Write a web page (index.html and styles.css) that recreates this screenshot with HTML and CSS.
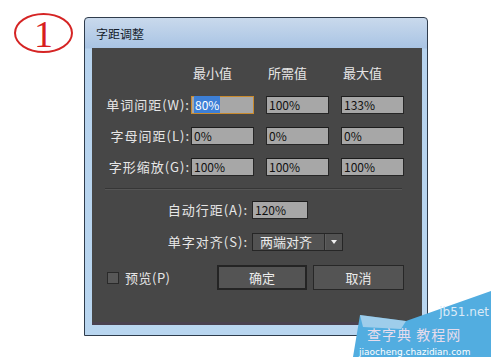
FILE: index.html
```html
<!DOCTYPE html>
<html lang="zh-CN">
<head>
  <meta charset="UTF-8">
  <meta name="viewport" content="width=device-width, initial-scale=1">
  <title>字距调整</title>
  <link rel="stylesheet" href="styles.css">
</head>
<body>
  <div class="page">
    <div class="marker"><span>1</span></div>

    <div class="dialog">
      <div class="titlebar">字距调整</div>
      <div class="panel">
        <div class="grid">
          <div></div>
          <div class="colhead">最小值</div>
          <div class="colhead">所需值</div>
          <div class="colhead">最大值</div>

          <label class="lbl">单词间距(W):</label>
          <div class="field focus"><span class="sel">80%</span></div>
          <div class="field">100%</div>
          <div class="field">133%</div>

          <label class="lbl">字母间距(L):</label>
          <div class="field">0%</div>
          <div class="field">0%</div>
          <div class="field">0%</div>

          <label class="lbl">字形缩放(G):</label>
          <div class="field">100%</div>
          <div class="field">100%</div>
          <div class="field">100%</div>
        </div>

        <div class="sep"></div>

        <div class="row">
          <label class="lbl">自动行距(A):</label>
          <div class="field small">120%</div>
        </div>
        <div class="row">
          <label class="lbl">单字对齐(S):</label>
          <div class="select">
            <span class="select-text">两端对齐</span>
            <span class="select-arrow"></span>
          </div>
        </div>

        <div class="actions">
          <label class="check"><span class="box"></span>预览(P)</label>
          <div class="buttons">
            <button class="btn default">确定</button>
            <button class="btn">取消</button>
          </div>
        </div>
      </div>
    </div>
  </div>

  <div class="watermark">
    <svg width="140" height="70" viewBox="0 0 140 70">
      <polygon points="2,70 9,28 55,34 140,4 140,70" fill="#52ade0"/>
      <polygon points="9,28 55,34 50,42 12,40" fill="#e9eef5" opacity="0.5"/>
    </svg>
    <span class="wm-site">jb51.net</span>
    <span class="wm-name">查字典 教程网</span>
    <span class="wm-url">jiaocheng.chazidian.com</span>
  </div>
</body>
</html>
```

FILE: styles.css
```css
* {
  box-sizing: border-box;
}

body {
  margin: 0;
  background: #ffffff;
  font-family: "Noto Sans CJK SC", "DejaVu Sans", sans-serif;
  font-size: 12px;
  overflow: hidden;
}

.page {
  display: flex;
  align-items: flex-start;
  padding: 13px 0 0 14px;
}

.marker {
  width: 59px;
  height: 40px;
  border: 2px solid #d52424;
  border-radius: 50%;
  display: flex;
  justify-content: center;
  align-items: center;
}

.marker span {
  font-family: "Liberation Serif", serif;
  font-size: 38px;
  line-height: 1;
  color: #d81e1e;
  margin-top: 2px;
}

.dialog {
  margin: 4px 0 0 11px;
  width: 344px;
  height: 319px;
  border: 1px solid #2f3c4c;
  border-radius: 4px 4px 0 0;
  background: linear-gradient(to bottom, #c9d9ec 0, #a9c4e4 30px, #b7d3ee 31px, #b9d6f0 100%);
  display: flex;
  flex-direction: column;
}

.titlebar {
  height: 30px;
  padding: 9px 0 0 11px;
  color: #141c2c;
  font-size: 12px;
  line-height: 14px;
}

.panel {
  margin: 0 5px 10px 7px;
  flex: 1;
  background: #474747;
  border-bottom: 3px solid #4a4250;
  padding: 19px 18px 0 13px;
  color: #e6e6e6;
  font-size: 13px;
}

.grid {
  display: grid;
  grid-template-columns: 86px 75px 75px 63px;
  grid-template-rows: 16px 18px 18px 18px;
  row-gap: 13px;
}

.grid .colhead {
  padding-left: 2px;
  line-height: 16px;
  margin-top: -2px;
}

.lbl {
  text-align: right;
  line-height: 18px;
  white-space: nowrap;
  letter-spacing: 1px;
  padding-right: 1px;
}

.field {
  width: 63px;
  height: 18px;
  background: #a7a7a7;
  border: 1px solid #262626;
  border-top-color: #1c1c1c;
  color: #111111;
  font-size: 12px;
  line-height: 16px;
  padding-left: 2px;
}

.field.focus {
  border-color: #c98a2d;
}

.field .sel {
  background: #3d7fd6;
  color: #ffffff;
  padding: 0 1px;
}

.sep {
  margin: 12px 2px 11px 0;
  height: 2px;
  border-top: 1px solid #363636;
  border-bottom: 1px solid #555555;
}

.row {
  display: grid;
  grid-template-columns: 144px auto;
  column-gap: 3px;
  align-items: center;
  justify-items: start;
  margin-bottom: 14px;
}

.row .lbl {
  justify-self: end;
}

.field.small {
  width: 56px;
}

.select {
  width: 91px;
  height: 18px;
  display: flex;
  background: #525252;
  border: 1px solid #262626;
}

.select-text {
  flex: 1;
  line-height: 16px;
  padding-left: 7px;
  color: #ececec;
  border-right: 1px solid #2c2c2c;
}

.select-arrow {
  width: 17px;
  display: flex;
  justify-content: center;
  align-items: center;
  border-left: 1px solid #5e5e5e;
}

.select-arrow::after {
  content: "";
  border-left: 3px solid transparent;
  border-right: 3px solid transparent;
  border-top: 4px solid #f0f0f0;
}

.actions {
  display: flex;
  align-items: center;
  margin-top: 10px;
  padding-left: 2px;
}

.check {
  display: flex;
  align-items: center;
  gap: 6px;
  color: #e6e6e6;
  letter-spacing: 0.5px;
}

.box {
  width: 12px;
  height: 12px;
  background: #585858;
  border: 1px solid #2a2a2a;
}

.buttons {
  margin-left: auto;
  display: flex;
  gap: 6px;
}

.btn {
  width: 91px;
  height: 25px;
  padding: 0;
  background: #545454;
  border: 1px solid #272727;
  color: #ececec;
  font-family: "Noto Sans CJK SC", sans-serif;
  font-size: 13px;
  line-height: 22px;
}

.btn.default {
  width: 90px;
  border: 2px solid #242424;
}

.watermark {
  position: absolute;
  right: 0;
  bottom: 0;
  width: 140px;
  height: 70px;
}

.watermark svg {
  position: absolute;
  left: 0;
  top: 0;
}

.wm-site {
  position: absolute;
  right: 2px;
  top: 18px;
  color: #dbeaf7;
  font-family: "DejaVu Sans", sans-serif;
  font-size: 12px;
}

.wm-name {
  position: absolute;
  left: 16px;
  top: 37px;
  color: #e6dcec;
  font-size: 14px;
  letter-spacing: 1px;
}

.wm-url {
  position: absolute;
  left: 8px;
  bottom: 0;
  color: #ffffff;
  font-family: "DejaVu Sans", sans-serif;
  font-size: 9px;
}
```
